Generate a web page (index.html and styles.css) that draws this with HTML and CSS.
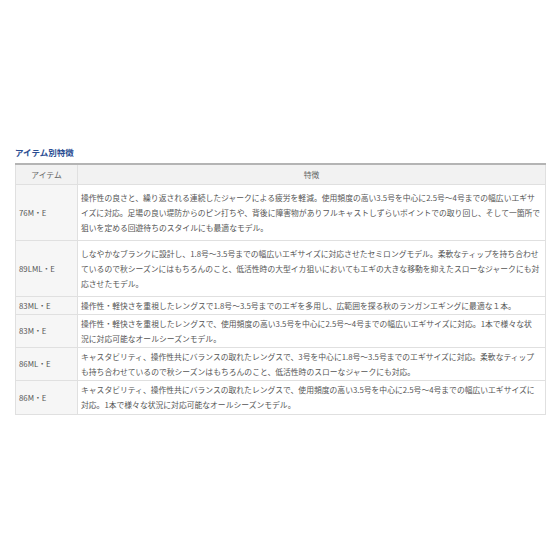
FILE: index.html
```html
<!DOCTYPE html>
<html lang="ja">
<head>
<meta charset="utf-8">
<title>アイテム別特徴</title>
<link rel="stylesheet" href="styles.css">
</head>
<body>
<div class="page">
  <h2 class="title">アイテム別特徴</h2>
  <table class="spec">
    <thead>
      <tr class="r-head">
        <th class="c-item">アイテム</th>
        <th class="c-desc">特徴</th>
      </tr>
    </thead>
    <tbody>
      <tr class="r-56">
        <td class="c-item">76M・E</td>
        <td class="c-desc">操作性の良さと、繰り返される連続したジャークによる疲労を軽減。使用頻度の高い3.5号を中心に2.5号～4号までの幅広いエギサ<br>イズに対応。足場の良い堤防からのピン打ちや、背後に障害物がありフルキャストしずらいポイントでの取り回し、そして一箇所で<br>狙いを定める回遊待ちのスタイルにも最適なモデル。</td>
      </tr>
      <tr class="r-56">
        <td class="c-item">89LML・E</td>
        <td class="c-desc">しなやかなブランクに設計し、1.8号～3.5号までの幅広いエギサイズに対応させたセミロングモデル。柔軟なティップを持ち合わせ<br>ているので秋シーズンにはもちろんのこと、低活性時の大型イカ狙いにおいてもエギの大きな移動を抑えたスローなジャークにも対<br>応させたモデル。</td>
      </tr>
      <tr class="r-18">
        <td class="c-item">83ML・E</td>
        <td class="c-desc">操作性・軽快さを重視したレングスで1.8号～3.5号までのエギを多用し、広範囲を探る秋のランガンエギングに最適な１本。</td>
      </tr>
      <tr class="r-29">
        <td class="c-item">83M・E</td>
        <td class="c-desc">操作性・軽快さを重視したレングスで、使用頻度の高い3.5号を中心に2.5号～4号までの幅広いエギサイズに対応。1本で様々な状<br>況に対応可能なオールシーズンモデル。</td>
      </tr>
      <tr class="r-31">
        <td class="c-item">86ML・E</td>
        <td class="c-desc">キャスタビリティ、操作性共にバランスの取れたレングスで、3号を中心に1.8号～3.5号までのエギサイズに対応。柔軟なティップ<br>も持ち合わせているので秋シーズンはもちろんのこと、低活性時のスローなジャークにも対応。</td>
      </tr>
      <tr class="r-37">
        <td class="c-item">86M・E</td>
        <td class="c-desc">キャスタビリティ、操作性共にバランスの取れたレングスで、使用頻度の高い3.5号を中心に2.5号～4号までの幅広いエギサイズに<br>対応。1本で様々な状況に対応可能なオールシーズンモデル。</td>
      </tr>
    </tbody>
  </table>
</div>
</body>
</html>
```

FILE: styles.css
```css
html, body {
  margin: 0;
  padding: 0;
  background: #ffffff;
}

.page {
  padding: 147px 14px 0 15px;
  font-family: "Noto Sans CJK JP", "Noto Sans", sans-serif;
  color: #555555;
}

.title {
  margin: 0 0 5px 0;
  font-size: 8.5px;
  line-height: 11px;
  font-weight: bold;
  color: #2a4d92;
}

.spec {
  width: 531px;
  border-collapse: collapse;
  font-size: 7.8px;
  line-height: 15px;
  border-top: 2px solid #b4b4b4;
}

.spec th,
.spec td {
  border: 1px solid #e0e0e0;
  padding: 1px 3px;
  vertical-align: middle;
  white-space: nowrap;
}

.spec th {
  background: #f2f2f2;
  font-weight: normal;
  color: #666666;
  text-align: center;
}

.spec td.c-item {
  background: #f6f6f6;
  width: 55px;
}

.spec td.c-desc {
  background: #ffffff;
}

.r-head { height: 20px; }
.r-56 { height: 56px; }
.r-18 { height: 18px; }
.r-29 { height: 28px; }
.r-31 { height: 32px; }
.r-37 { height: 34px; }
```
